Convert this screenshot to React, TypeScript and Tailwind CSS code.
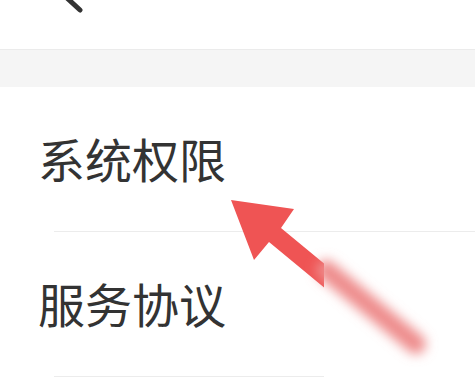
import React from 'react';

const rows = ['系统权限', '服务协议'];

export default function App() {
  return (
    <div
      className="relative w-[475px] h-[379px] overflow-hidden bg-white text-[#333333]"
      style={{ fontFamily: '"Noto Sans CJK SC", "Noto Sans", sans-serif' }}
    >
      <header className="h-[50px] border-b border-[#ebebeb] pl-[60px]">
        <svg width="30" height="14" viewBox="0 0 30 14" className="block">
          <line x1="7" y1="-2" x2="20" y2="10" stroke="#333" strokeWidth="5" strokeLinecap="round" />
        </svg>
      </header>
      <div className="h-[37px] bg-[#f5f5f5]" />
      <div className="flex flex-col">
        {rows.map((label) => (
          <div key={label} className="flex flex-col">
            <div className="h-[144px] flex items-center pl-[38px] pb-[3px] text-[47px] leading-none">{label}</div>
            <div className="ml-[54px] h-px bg-[#ececec]" />
          </div>
        ))}
      </div>

      {/* annotation arrow */}
      <svg className="absolute inset-0 pointer-events-none" width="475" height="379" viewBox="0 0 475 379">
        <defs>
          <filter id="blur" x="-50%" y="-50%" width="200%" height="200%">
            <feGaussianBlur stdDeviation="6" />
          </filter>
        </defs>
        <polygon
          points="231,200 294,209 281,228 350,285 338,299 269,242 254,260"
          fill="#ef5454"
        />
        <rect x="324" y="261" width="151" height="118" fill="#ffffff" />
        <line x1="326" y1="270" x2="416" y2="344" stroke="#ee8c8c" strokeWidth="20" strokeLinecap="round" filter="url(#blur)" />
      </svg>
    </div>
  );
}
